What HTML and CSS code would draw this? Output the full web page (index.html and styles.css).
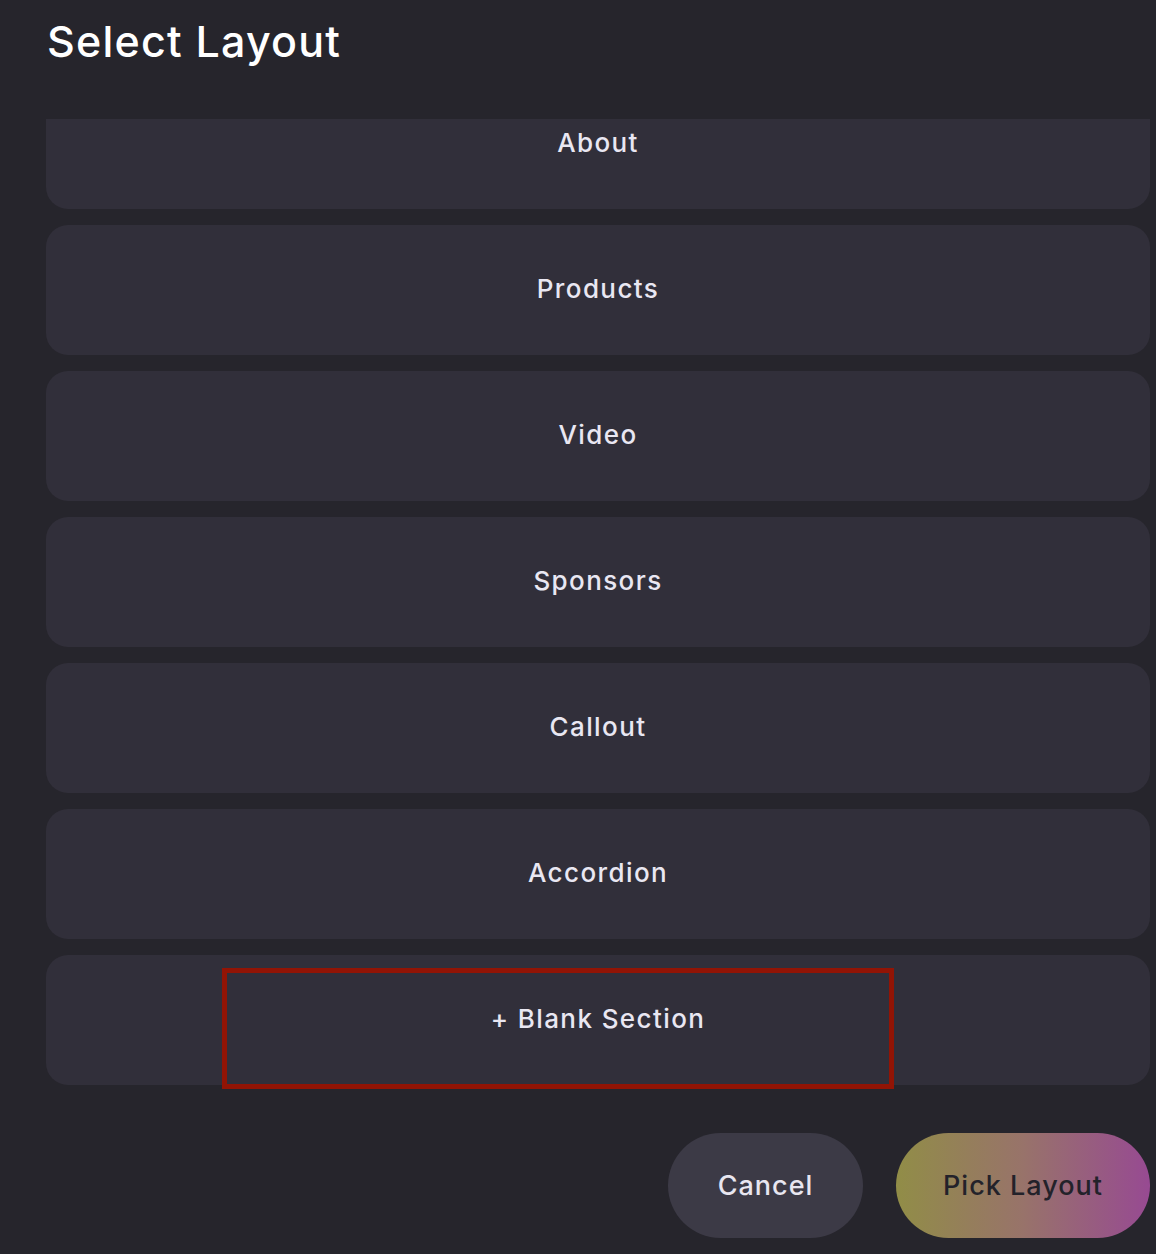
FILE: index.html
```html
<!DOCTYPE html>
<html lang="en">
<head>
<meta charset="utf-8">
<title>Select Layout</title>
<link rel="stylesheet" href="styles.css">
</head>
<body>
<div class="dialog">
  <header class="dialog-header">
    <h1 class="dialog-title">Select Layout</h1>
  </header>
  <div class="layout-list">
    <div class="layout-track">
      <div class="layout-card"><span>About</span></div>
      <div class="layout-card"><span>Products</span></div>
      <div class="layout-card"><span>Video</span></div>
      <div class="layout-card"><span>Sponsors</span></div>
      <div class="layout-card"><span>Callout</span></div>
      <div class="layout-card"><span>Accordion</span></div>
      <div class="layout-card layout-card-blank">
        <span>+ Blank Section</span>
        <div class="highlight"></div>
      </div>
    </div>
  </div>
  <footer class="dialog-footer">
    <button class="btn btn-cancel">Cancel</button>
    <button class="btn btn-pick">Pick Layout</button>
  </footer>
</div>
</body>
</html>
```

FILE: styles.css
```css
* { box-sizing: border-box; }
html, body {
  margin: 0;
  padding: 0;
  background: #26252c;
  height: 100%;
}
body {
  font-family: "Inter", "Noto Sans", "Liberation Sans", sans-serif;
  color: #e8e6f0;
  overflow: hidden;
}
.dialog {
  width: 1156px;
  height: 1254px;
  padding: 0 6px 0 46px;
  display: flex;
  flex-direction: column;
}
.dialog-header {
  height: 119px;
  flex: none;
}
.dialog-title {
  margin: 0;
  padding-top: 15px;
  padding-left: 1px;
  font-size: 43px;
  line-height: 52px;
  font-weight: 500;
  color: #ffffff;
  letter-spacing: 1.2px;
}
.layout-list {
  height: 982px;
  flex: none;
  overflow: hidden;
}
.layout-track {
  margin-top: -40px;
  display: flex;
  flex-direction: column;
  gap: 16px;
}
.layout-card {
  position: relative;
  height: 130px;
  padding-bottom: 4px;
  border-radius: 22px;
  background: #312f3a;
  display: flex;
  align-items: center;
  justify-content: center;
  font-size: 26px;
  font-weight: 500;
  letter-spacing: 1.4px;
  color: #e9e7f2;
}
.highlight {
  position: absolute;
  left: 176px;
  top: 13px;
  width: 672px;
  height: 121px;
  border: 5px solid #921405;
  pointer-events: none;
}
.dialog-footer {
  display: flex;
  justify-content: flex-end;
  gap: 33px;
  padding-top: 32px;
}
.btn {
  height: 105px;
  border: none;
  border-radius: 53px;
  font-family: inherit;
  font-size: 27px;
  font-weight: 500;
  letter-spacing: 1px;
}
.btn-cancel {
  width: 195px;
  background: #3c3a46;
  color: #e8e6f0;
}
.btn-pick {
  width: 254px;
  background: linear-gradient(90deg, #918d47 0%, #98736a 50%, #974a92 100%);
  color: #23222a;
}
```
